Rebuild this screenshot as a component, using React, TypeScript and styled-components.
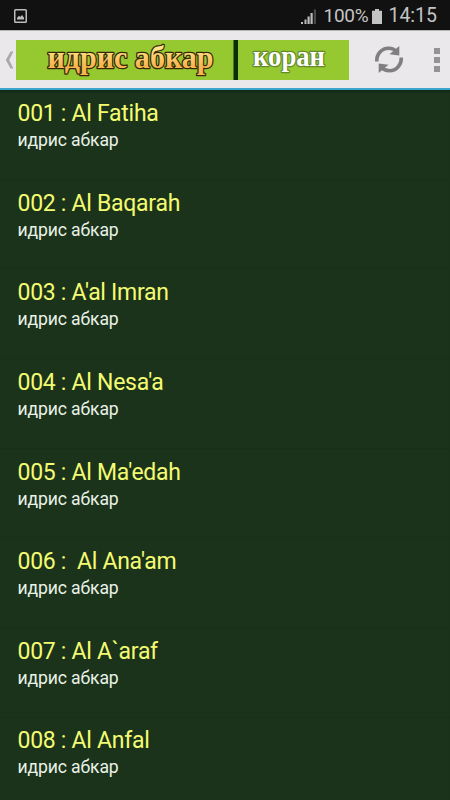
import React from "react";
import styled, { createGlobalStyle } from "styled-components";

const GlobalStyle = createGlobalStyle`
  * { box-sizing: border-box; }
  body { margin: 0; background: #1b331b; font-family: Roboto, "Noto Sans", sans-serif; }
`;

const Screen = styled.div`
  width: 450px;
  height: 800px;
  overflow: hidden;
  display: flex;
  flex-direction: column;
  background: #1c331b;
`;

const StatusBar = styled.header`
  flex: none;
  height: 30px;
  padding: 2px 13px 0 14px;
  display: flex;
  align-items: center;
  background: #111;
  color: #c4c4c4;
  font-size: 19px;
  line-height: 30px;
`;

const Spacer = styled.div`
  flex: 1;
`;

const Percent = styled.span`
  margin-left: 6px;
  letter-spacing: -0.25px;
`;

const Clock = styled.span`
  margin-left: 6px;
  font-size: 19.5px;
`;

const StatusIcon = styled.svg<{ $gap?: number }>`
  flex: none;
  display: block;
  margin-left: ${(p) => p.$gap ?? 0}px;
`;

const ActionBar = styled.nav`
  flex: none;
  height: 60px;
  padding: 1px 10px 0 5px;
  display: flex;
  align-items: center;
  background: #eae8ea;
  border-top: 1px solid #b5b3b5;
  border-bottom: 2px solid #3aa5cb;
`;

const BarIcon = styled.svg`
  flex: none;
  display: block;
`;

const Banner = styled.h1`
  flex: none;
  width: 333px;
  height: 40px;
  margin: 0 25px 0 2px;
  display: flex;
  background: #96c930;
`;

const BannerArt = styled.svg`
  display: block;
  font-family: "Liberation Serif", serif;
  font-weight: 700;
`;

const Dots = styled.div`
  margin-left: 30px;
  display: grid;
  gap: 3px;
`;

const Dot = styled.i`
  width: 6px;
  height: 6px;
  background: #949294;
`;

const List = styled.ul`
  margin: 0;
  padding: 0;
  list-style: none;
  background: #1c331b;
  box-shadow: inset 0 3px 2px -1px #102a1b;
`;

const Row = styled.li`
  height: 89.67px;
  padding: 9.9px 18px 0 17.5px;
  border-bottom: 1px solid #1a2f19;
`;

const Title = styled.div`
  color: #f3fb72;
  font-size: 23px;
  line-height: 27px;
  letter-spacing: -0.28px;
  white-space: pre;
`;

const Reciter = styled.div`
  margin-top: 2px;
  color: #e9f2e7;
  font-size: 17.6px;
  line-height: 22px;
  letter-spacing: -0.13px;
`;

const chapters = [
  "001 : Al Fatiha",
  "002 : Al Baqarah",
  "003 : A'al Imran",
  "004 : Al Nesa'a",
  "005 : Al Ma'edah",
  "006 :  Al Ana'am",
  "007 : Al A`araf",
  "008 : Al Anfal",
];

function Status() {
  return (
    <StatusBar>
      <StatusIcon width="13" height="14" viewBox="0 0 13 14">
        <rect x="0.75" y="0.75" width="11.5" height="12.5" rx="0.8" fill="none" stroke="#bdbdbd" strokeWidth="1.5" />
        <path d="M3 10.5V9l2-2.2L6.3 8 8 6l2 2.8v1.7z" fill="#bdbdbd" />
      </StatusIcon>
      <Spacer />
      <StatusIcon width="16" height="15" viewBox="0 0 16 15">
        <path d="M0 13h2v2H0zM3.5 10.5h2V15h-2zM6.5 7.5h2.2V15H6.5zM9.5 4h2.2v11H9.5z" fill="#bdbdbd" />
        <path d="M12.8 0.5H15V15h-2.2z" fill="#484848" />
      </StatusIcon>
      <Percent>100%</Percent>
      <StatusIcon $gap={4} width="10" height="15" viewBox="0 0 10 15">
        <path d="M3 0h4v1.8h3V15H0V1.8h3z" fill="#c4c4c4" />
      </StatusIcon>
      <Clock>14:15</Clock>
    </StatusBar>
  );
}

function Logo() {
  return (
    <Banner>
      <BannerArt width="333" height="40" viewBox="0 0 333 40">
        <defs>
          <linearGradient id="gold" x1="0" y1="0" x2="0" y2="1">
            <stop offset="0.25" stopColor="#ffe48a" />
            <stop offset="0.75" stopColor="#f8b552" />
          </linearGradient>
        </defs>
        <text transform="translate(31.5 27.5) scale(1 1.1)" fontSize="28" textLength="166" lengthAdjust="spacingAndGlyphs" fill="url(#gold)" stroke="#33280a" strokeWidth="2.3" strokeLinejoin="round" paintOrder="stroke">
          идрис абкар
        </text>
        <rect x="217.5" width="4.5" height="40" fill="#0b3008" />
        <text transform="translate(237 26) scale(1 1.08)" fontSize="27" textLength="72" lengthAdjust="spacingAndGlyphs" fill="#fff" stroke="#668a2a" strokeWidth="2.4" strokeLinejoin="round" paintOrder="stroke">
          коран
        </text>
      </BannerArt>
    </Banner>
  );
}

export default function App() {
  return (
    <Screen>
      <GlobalStyle />
      <Status />
      <ActionBar>
        <BarIcon width="9" height="18" viewBox="0 0 9 18">
          <path d="M8.4 0.5H5.5L0.8 9l4.7 8.5h2.9L4.2 9z" fill="#aaa8aa" />
        </BarIcon>
        <Logo />
        <BarIcon width="30" height="30" viewBox="0 0 30 30">
          <g fill="none" stroke="#807e80" strokeWidth="3.6">
            <path d="M2.8 16.5C2.3 9 8 3.3 14.5 3.3c3.6 0 6.3 1.3 8.3 3.7" />
            <path d="M27.2 12.5c0.5 7.5-5.2 13.2-11.7 13.2-3.6 0-6.3-1.3-8.3-3.7" />
          </g>
          <path d="M25.3 1v9.5L15.5 9.3zM4.7 28v-9.5l9.8 1.2z" fill="#807e80" />
        </BarIcon>
        <Dots>
          <Dot />
          <Dot />
          <Dot />
        </Dots>
      </ActionBar>
      <List>
        {chapters.map((name) => (
          <Row key={name}>
            <Title>{name}</Title>
            <Reciter>идрис абкар</Reciter>
          </Row>
        ))}
      </List>
    </Screen>
  );
}
